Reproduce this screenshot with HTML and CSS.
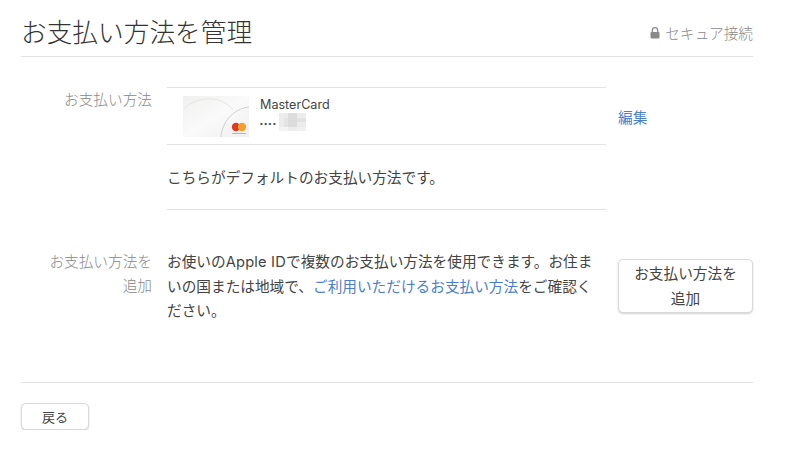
FILE: index.html
```html
<!DOCTYPE html>
<html lang="ja">
<head>
<meta charset="utf-8">
<title>お支払い方法を管理</title>
<link rel="stylesheet" href="styles.css">
</head>
<body>
<main class="page">
  <header class="head">
    <h1 class="title">お支払い方法を管理</h1>
    <div class="secure">
      <svg class="lock" viewBox="0 0 10 12" aria-hidden="true"><path d="M2.3 5V3.4a2.7 2.7 0 0 1 5.4 0V5" fill="none" stroke="#8a8a8a" stroke-width="1.3"/><rect x="0.5" y="5" width="9" height="6.5" rx="1" fill="#8a8a8a"/></svg>
      <span>セキュア接続</span>
    </div>
  </header>

  <section class="row row-method">
    <div class="label">お支払い方法</div>
    <div class="main">
      <div class="card">
        <svg class="card-art" viewBox="0 0 66 41" aria-hidden="true">
          <defs>
            <linearGradient id="sheen" x1="0" y1="0" x2="1" y2="1">
              <stop offset="0" stop-color="#f0f0ef"/>
              <stop offset="0.5" stop-color="#fafafa"/>
              <stop offset="1" stop-color="#efefee"/>
            </linearGradient>
          </defs>
          <rect width="66" height="41" fill="url(#sheen)"/>
          <path d="M0 14 C12 0 38 -2 50 14" fill="none" stroke="#e6e6e5" stroke-width="1"/>
          <path d="M38 41 C39 26 50 13 66 11" fill="none" stroke="#cfcfce" stroke-width="1"/>
          <circle cx="53" cy="31" r="4.200" fill="#dc3a22"/>
          <circle cx="59" cy="31" r="4.200" fill="#f0a02c"/>
          <rect x="49" y="37" width="14" height="1" fill="#b5b5b5"/>
        </svg>
        <div class="card-info">
          <div class="card-name">MasterCard</div>
          <div class="card-num">
            <span class="dots">••••</span>
            <svg class="mosaic" viewBox="0 0 6 4" shape-rendering="crispEdges" aria-hidden="true">
              <rect width="6" height="4" fill="#ececec"/>
              <rect x="2" width="2" height="3" fill="#dcdcdc"/>
              <rect x="1" y="1" width="1" height="2" fill="#e4e4e4"/>
              <rect x="4" y="1" width="2" height="1" fill="#e2e2e2"/>
              <rect y="3" width="2" height="1" fill="#f3f3f3"/>
              <rect x="4" y="3" width="2" height="1" fill="#f0f0f0"/>
            </svg>
          </div>
        </div>
      </div>
      <p class="default-note">こちらがデフォルトのお支払い方法です。</p>
    </div>
    <div class="side side-edit"><a class="link" href="#">編集</a></div>
  </section>

  <section class="row row-add">
    <div class="label">お支払い方法を<br>追加</div>
    <div class="main">
      <p class="desc">お使いの<span class="latin">Apple ID</span>で複数のお支払い方法を使用できます。お住まいの国または地域で、<a class="link" href="#">ご利用いただけるお支払い方法</a>をご確認ください。</p>
    </div>
    <div class="side"><button class="btn btn-add" type="button">お支払い方法を<br>追加</button></div>
  </section>

  <footer class="foot">
    <button class="btn btn-back" type="button">戻る</button>
  </footer>
</main>
</body>
</html>
```

FILE: styles.css
```css
* { box-sizing: border-box; }
html, body { margin: 0; padding: 0; background: #fff; }
body {
  font-family: "Noto Sans CJK JP", "Liberation Sans", sans-serif;
  color: #444;
  overflow: hidden;
}
.page { width: 732px; margin-left: 21px; }
.head {
  height: 57px;
  border-bottom: 1px solid #e3e3e3;
  display: flex;
  justify-content: space-between;
  align-items: flex-start;
}
.title {
  margin: 12px 0 0;
  font-size: 25.700px;
  line-height: 38px;
  font-weight: 300;
  color: #333;
}
.secure {
  margin-top: 23px;
  display: flex;
  align-items: center;
  gap: 5px;
  font-size: 14.670px;
  line-height: 20px;
  font-weight: 300;
  color: #888;
}
.lock { width: 10px; height: 12px; }
.row { display: grid; grid-template-columns: 131px 454px 147px; }
.label { font-size: 14.670px; line-height: 24px; color: #888; text-align: right; font-weight: 300; white-space: nowrap; }
.main { padding-left: 15px; }
.side { margin-left: 12px; }
.row-method { margin-top: 30px; height: 123px; }
.card {
  height: 58px;
  border-top: 1px solid #e3e3e3;
  border-bottom: 1px solid #e3e3e3;
  display: flex;
  align-items: center;
  padding-left: 16px;
}
.card-art { width: 66px; height: 41px; }
.card-info { margin-left: 11px; margin-top: -2px; }
.card-name { font-family: "Inter", "Liberation Sans", sans-serif; font-size: 12.600px; line-height: 14px; color: #444; }
.card-num { display: flex; align-items: center; height: 21px; }
.dots { font-family: "Liberation Sans", sans-serif; font-size: 8px; letter-spacing: 1.500px; line-height: 21px; color: #444; width: 19px; margin-top: 3px; }
.mosaic { width: 27px; height: 18px; }
.default-note {
  margin: 0;
  height: 65px;
  padding: 20px 0 0;
  font-size: 14.670px;
  line-height: 24px;
  border-bottom: 1px solid #e3e3e3;
  white-space: nowrap;
}
.side-edit { padding-top: 18px; font-size: 14.670px; line-height: 24px; }
.link { color: #4a7fd0; text-decoration: none; }
.row-add { margin-top: 39px; height: 134px; border-bottom: 1px solid #e3e3e3; }
.desc { margin: 0; padding-right: 4px; font-size: 14.670px; line-height: 24px; }
.latin { font-family: "Inter", "Liberation Sans", sans-serif; letter-spacing: .2px; }
.btn {
  font-family: inherit;
  font-size: 14.670px;
  line-height: 25px;
  color: #444;
  background: #fff;
  border: 1px solid #d8d8d8;
  border-radius: 5px;
  box-shadow: 0 1px 2px rgba(0,0,0,.18);
  padding: 0 0 2px;
}
.btn-add { width: 135px; height: 54px; margin-top: 10px; }
.foot { padding-top: 20px; }
.btn-back { width: 68px; height: 27px; font-size: 13px; }
```
